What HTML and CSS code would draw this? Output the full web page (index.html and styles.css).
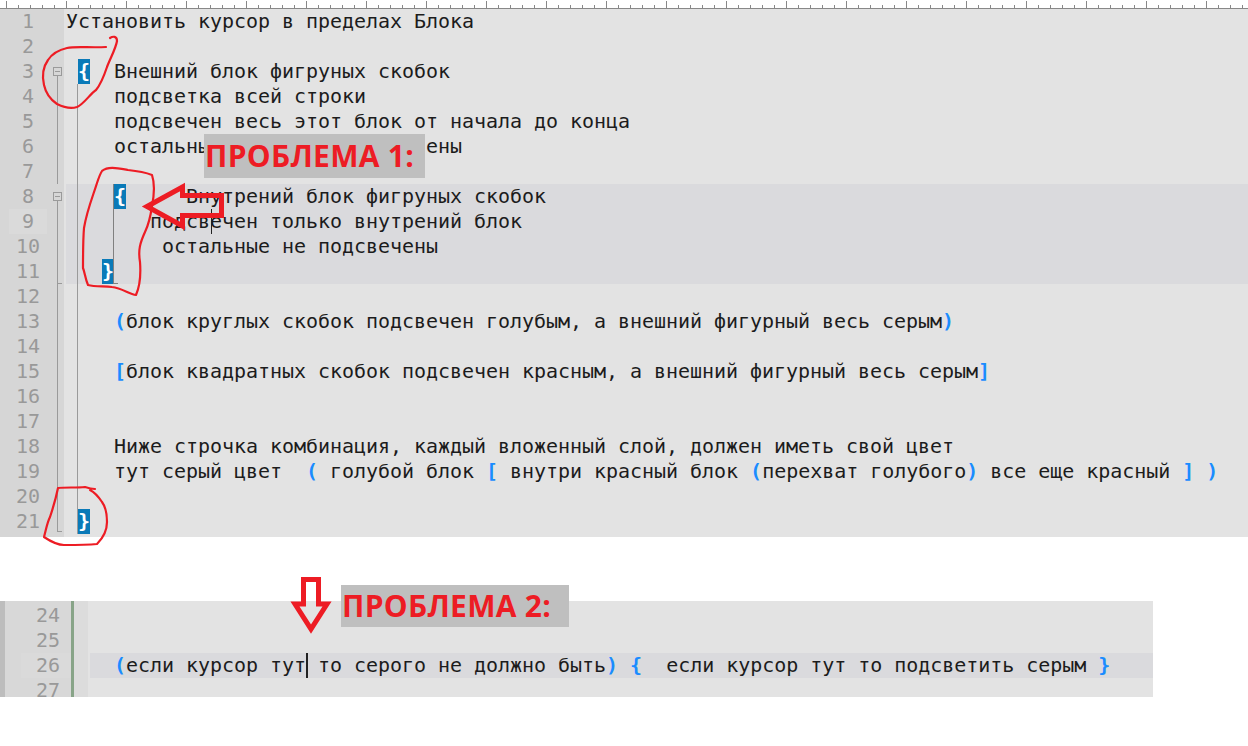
FILE: index.html
```html
<!DOCTYPE html>
<html lang="ru">
<head>
<meta charset="utf-8">
<title>Подсветка блоков</title>
<link rel="stylesheet" href="styles.css">
</head>
<body>
<main class="page">
  <section class="editor">
    <div class="ruler"></div>
    <div class="row"><span class="num">1</span><div class="code">Установить курсор в пределах Блока</div></div>
    <div class="row"><span class="num">2</span><div class="code"></div></div>
    <div class="row"><span class="num">3</span><div class="code"> <b class="match">{</b>  Внешний блок фигруных скобок</div></div>
    <div class="row"><span class="num">4</span><div class="code">    подсветка всей строки</div></div>
    <div class="row"><span class="num">5</span><div class="code">    подсвечен весь этот блок от начала до конца</div></div>
    <div class="row"><span class="num">6</span><div class="code">    остальные блоки не подсвечены</div></div>
    <div class="row"><span class="num">7</span><div class="code"></div></div>
    <div class="row"><span class="num">8</span><div class="code hl">    <b class="match">{</b>     Внутрений блок фигруных скобок</div></div>
    <div class="row"><span class="num cur">9</span><div class="code hl">       подсвечен только внутрений блок</div></div>
    <div class="row"><span class="num">10</span><div class="code hl">        остальные не подсвечены</div></div>
    <div class="row"><span class="num">11</span><div class="code hl">   <b class="match">}</b></div></div>
    <div class="row"><span class="num">12</span><div class="code"></div></div>
    <div class="row"><span class="num">13</span><div class="code">    <i class="br">(</i>блок круглых скобок подсвечен голубым, а внешний фигурный весь серым<i class="br">)</i></div></div>
    <div class="row"><span class="num">14</span><div class="code"></div></div>
    <div class="row"><span class="num">15</span><div class="code">    <i class="br">[</i>блок квадратных скобок подсвечен красным, а внешний фигурный весь серым<i class="br">]</i></div></div>
    <div class="row"><span class="num">16</span><div class="code"></div></div>
    <div class="row"><span class="num">17</span><div class="code"></div></div>
    <div class="row"><span class="num">18</span><div class="code">    Ниже строчка комбинация, каждый вложенный слой, должен иметь свой цвет</div></div>
    <div class="row"><span class="num">19</span><div class="code">    тут серый цвет  <i class="br">(</i> голубой блок <i class="br">[</i> внутри красный блок <i class="br">(</i>перехват голубого<i class="br">)</i> все еще красный <i class="br">]</i> <i class="br">)</i></div></div>
    <div class="row"><span class="num">20</span><div class="code"></div></div>
    <div class="row"><span class="num">21</span><div class="code"> <b class="match">}</b></div></div>
    <svg class="guides" width="130" height="537" viewBox="0 0 130 537" aria-hidden="true">
      <g fill="none" stroke="#9a9a9a" stroke-width="1" shape-rendering="crispEdges">
        <rect x="53.5" y="67.5" width="8" height="8"/>
        <path d="M55 71.5h5"/>
        <path d="M57.5 76V184"/>
        <rect x="53.5" y="192.5" width="8" height="8"/>
        <path d="M55 196.5h5"/>
        <path d="M57.5 201V283.5H62"/>
        <path d="M57.5 284V531.5H62"/>
        <path d="M77.5 84V534"/>
        <path d="M113.5 184V283.5H118" stroke="#808080"/>
      </g>
    </svg>
    <span class="caret caret-one"></span>
  </section>

  <section class="panel">
    <div class="strip"></div>
    <div class="panel-gutter">
      <span class="pnum">24</span>
      <span class="pnum">25</span>
      <span class="pnum cur">26</span>
      <span class="pnum">27</span>
    </div>
    <div class="panel-margin"></div>
    <div class="panel-code">
      <div class="pline"></div>
      <div class="pline"></div>
      <div class="pline hl">  <i class="br">(</i>если курсор тут<span class="caret-inline"></span> то серого не должно быть<i class="br">)</i> <i class="br">{</i>  если курсор тут то подсветить серым <i class="br">}</i></div>
      <div class="pline"></div>
    </div>
  </section>

  <div class="label label-one">ПРОБЛЕМА 1:</div>
  <div class="label label-two">ПРОБЛЕМА 2:</div>

  <svg class="marks" width="1248" height="746" viewBox="0 0 1248 746" aria-hidden="true">
    <g fill="none" stroke="#ed1c24" stroke-linejoin="round" stroke-linecap="round">
      <path stroke-width="2.2" d="M106 47C90 48 76 46 67 48C58 50 52 54 48 60C43 67 42 76 44 85C46 94 51 100 57 104C63 107 71 109 77 107C84 104 90 94 96 90C101 84 104 76 107 67C110 59 116 48 117 41C117 36 113 36 110 38"/>
      <path stroke-width="2.2" d="M102 171C108 166 117 168 128 170C138 171 147 173 152 175C155 184 154 196 152 206C150 220 148 226 145 232C140 243 138 250 140 262C141 275 139 288 136 295C129 294 122 288 112 287C104 286 95 287 88 285C85 278 85 273 83 268C83 256 83 240 84 228C87 210 93 196 97 183C99 177 100 174 102 171"/>
      <path stroke-width="2.2" d="M95 489C91 489 88 488 85 487C76 488 66 487 58 488C56 498 53 508 50 517C47 523 46 530 44 537C50 541 57 545 64 545C75 545 87 545 97 544C103 538 107 530 107 522C107 514 105 506 102 502C98 496 94 492 90 490"/>
      <path stroke-width="5" stroke-linejoin="miter" stroke-linecap="butt" d="M147 206.500L182.500 187V195.500H221.500V215.500H182.500V226Z"/>
      <path stroke-width="5" stroke-linejoin="miter" stroke-linecap="butt" d="M303.500 579.500H318.500V604H327L311 629L295 604H303.500Z"/>
    </g>
  </svg>
</main>
</body>
</html>
```
FILE: styles.css
```css
* {
  box-sizing: border-box;
}

html,
body {
  margin: 0;
  padding: 0;
  background: #fff;
}

.page {
  position: relative;
  width: 1248px;
  height: 746px;
  overflow: hidden;
  font-family: "DejaVu Sans Mono", monospace;
  font-size: 20px;
  letter-spacing: -0.04px;
  color: #1c1c1c;
}

.editor {
  position: relative;
  height: 537px;
  background: linear-gradient(90deg, #d6d6d6 0 64px, #e3e3e3 64px);
}

.ruler {
  height: 9px;
  background-color: #fff;
  background-image:
    linear-gradient(#888, #888),
    linear-gradient(90deg, #888 0 1px, transparent 1px),
    linear-gradient(90deg, #888 0 1px, transparent 1px);
  background-size: 100% 1px, 60px 7px, 12px 3px;
  background-position: 0 8px, 66px 1px, 66px 5px;
  background-repeat: repeat-x;
}

.row {
  display: flex;
  height: 25px;
  line-height: 25px;
}

.num {
  width: 38px;
  margin: 0 17px 0 9px;
  text-align: center;
  color: #999;
}

.cur {
  background: #dadada;
}

.code {
  flex: 1;
  min-width: 0;
  margin-left: 2px;
  white-space: pre;
}

.hl {
  background: #dadadd;
}

.match {
  display: inline-block;
  width: 12px;
  font-weight: bold;
  text-align: center;
  background: #0a7ab8;
  color: #fff;
}

.br {
  font-style: normal;
  font-weight: bold;
  color: #1a8cff;
}

.guides {
  position: absolute;
  left: 0;
  top: 0;
}

.caret {
  position: absolute;
  width: 1px;
  background: #222;
}

.caret-one {
  left: 211px;
  top: 209px;
  height: 25px;
}

.panel {
  display: flex;
  width: 1153px;
  height: 96px;
  margin-top: 64px;
  overflow: hidden;
  background: #e3e3e3;
}

.strip {
  flex: none;
  width: 5px;
  background: #bdbdbd;
}

.panel-gutter {
  flex: none;
  width: 66px;
  padding: 2px 0 0 16px;
  background: #d8d8d8;
}

.pnum {
  display: block;
  width: 50px;
  height: 25px;
  padding-left: 15px;
  line-height: 25px;
  color: #999;
}

.panel-margin {
  flex: none;
  width: 17px;
  border-left: 3px solid #88a488;
  background: #dcdcdc;
}

.panel-code {
  flex: 1;
  min-width: 0;
  padding: 2px 0 0 2px;
}

.pline {
  height: 25px;
  line-height: 25px;
  white-space: pre;
}

.caret-inline {
  display: inline-block;
  width: 2px;
  height: 25px;
  margin-right: -2px;
  vertical-align: top;
  background: #222;
}

.label {
  position: absolute;
  padding-left: 1px;
  font-family: "Open Sans", sans-serif;
  font-weight: 700;
  font-size: 30px;
  letter-spacing: 0.3px;
  white-space: pre;
  background: #bfbfbf;
  color: #ed1c24;
}

.label-one {
  left: 204px;
  top: 134px;
  width: 221px;
  height: 44px;
  line-height: 44px;
}

.label-two {
  left: 341px;
  top: 585px;
  width: 228px;
  height: 42px;
  line-height: 42px;
}

.marks {
  position: absolute;
  left: 0;
  top: 0;
  pointer-events: none;
}
```
